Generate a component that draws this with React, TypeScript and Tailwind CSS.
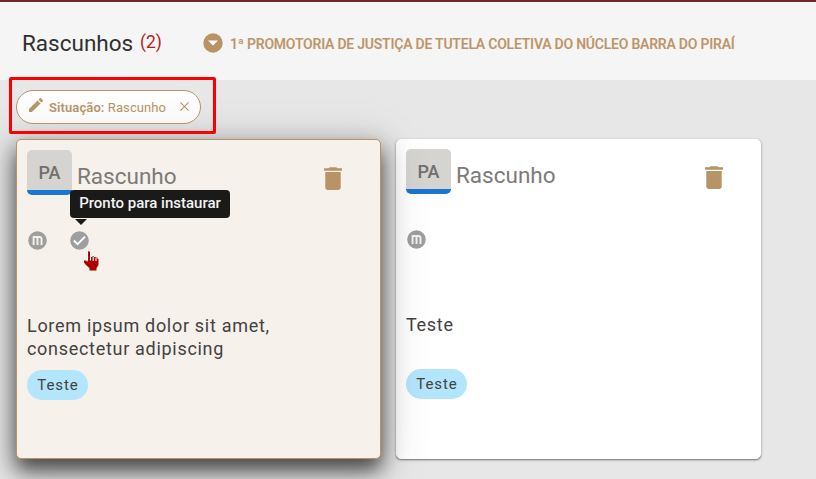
import React from "react";

function Trash() {
  return (
    <svg viewBox="5 3 14 18" preserveAspectRatio="none" className="h-[23px] w-[18px] fill-[#b89366]">
      <path d="M6 19c0 1.100.9 2 2 2h8c1.100 0 2-.9 2-2V7H6v12zM19 4h-3.500l-1-.8h-5l-1 .8H5v2h14V4z" />
    </svg>
  );
}

function MarkM() {
  return (
    <svg viewBox="0 0 19 19" className="h-[19px] w-[19px]">
      <circle cx="9.500" cy="9.500" r="9.300" fill="#9e9e9e" />
      <path d="M5.600 14V6H11.500Q13.500 6 13.500 8V14M9.500 6V14" fill="none" stroke="#f5f1eb" strokeWidth="1.900" />
    </svg>
  );
}

function Check() {
  return (
    <svg viewBox="0 0 19 19" className="h-[19px] w-[19px]">
      <circle cx="9.500" cy="9.500" r="9.300" fill="#9e9e9e" />
      <path d="M3.800 9.500L7.600 13.200L15 5.700" fill="none" stroke="#fff" strokeWidth="1.900" />
    </svg>
  );
}

function Pointer() {
  return (
    <svg viewBox="0 0 18 23" className="absolute left-[65px] top-[109px] h-[23px] w-[18px]">
      <path
        d="M5.500 3Q6.700 1.500 8 3V8H10V7.500H12V8H14V8.500H15.500V10H16.500V16L14.500 19V21.500H7.500V19L4.500 16.500L2 13.500V11.500H4L5.500 13Z"
        fill="#a80000"
      />
      <path d="M5.500 11.500V2.500M8.500 7V11.500M11.200 8V12M14 8.500V12" fill="none" stroke="#fff" strokeWidth="1.100" />
    </svg>
  );
}

function Tooltip() {
  return (
    <div className="absolute left-[53px] top-[50px] flex h-7 w-40 items-start justify-center rounded bg-[#1a1a18] pt-[2px] text-[15px] leading-[22px] font-medium whitespace-nowrap text-[#f3f3f3]">
      Pronto para instaurar
      <span className="absolute left-[5px] top-[29px] border-x-[6px] border-t-[6px] border-x-transparent border-t-[#1a1a18]" />
    </div>
  );
}

function Card({ text, active = false }: { text: string; active?: boolean }) {
  return (
    <article
      className={
        "relative w-[365px] rounded-[5px] border text-[#424242] " +
        (active
          ? "z-10 h-[320px] border-[#b89366] bg-[#f6f1eb] px-[10px] pt-[10px] shadow-[0_12px_17px_-2px_rgba(0,0,0,.45),0_9px_24px_2px_rgba(0,0,0,.36),0_9px_46px_8px_rgba(0,0,0,.12)]"
          : "h-[320px] border-white bg-white px-[9px] pt-[9px] shadow-[0_1px_3px_rgba(0,0,0,.35),0_1px_1px_rgba(0,0,0,.25)]")
      }
    >
      <div className="flex h-[45px]">
        <div className="flex h-[45px] w-[45px] items-center justify-center rounded-[5px] border-b-[5px] border-[#1976d2] bg-[#d5d4d0] pt-[5px] text-[18px] font-medium text-[#716f6d]">
          PA
        </div>
        <h2 className="ml-[5px] mt-[10px] text-[22.500px] leading-8 font-normal text-[#7c7a77]">Rascunho</h2>
        <button className="ml-auto mr-[28px] mt-[17px] h-[23px]">
          <Trash />
        </button>
      </div>
      <div className="mt-[36px] flex h-[19px] gap-[23px] pl-[1px]">
        <MarkM />
        {active && <Check />}
      </div>
      <p className="mt-[64px] h-[46px] w-[300px] text-[18px] leading-[23px] tracking-[.7px]">{text}</p>
      <span className="mt-[10px] flex h-[30px] w-[61px] items-center justify-center rounded-full bg-[#b3e5fc] pl-px text-[15px] tracking-[.9px]">
        Teste
      </span>
      {active && (
        <>
          <Tooltip />
          <Pointer />
        </>
      )}
    </article>
  );
}

export default function App() {
  return (
    <main className="h-[479px] w-[816px] overflow-hidden bg-[#e7e7e7] font-[Roboto,sans-serif]">
      <header className="flex h-20 items-start border-t-2 border-[#70262b] bg-[#f5f5f5] pl-[22px]">
        <h1 className="mt-[25px] w-[112px] text-[22.500px] leading-8 font-normal whitespace-nowrap text-[#303030]">Rascunhos</h1>
        <span className="mt-[24px] ml-[6px] w-[63px] text-[17.500px] leading-8 text-[#b71c1c]">(2)</span>
        <svg viewBox="0 0 20 20" className="mt-[31px] h-5 w-5">
          <circle cx="10" cy="10" r="9.700" fill="#b89366" />
          <path d="M5 7.500h10l-5 5z" fill="#fff" />
        </svg>
        <span className="ml-[7px] mt-[31px] text-[14px] leading-[22px] font-semibold tracking-[-.23px] whitespace-nowrap text-[#bd9569]">
          1ª PROMOTORIA DE JUSTIÇA DE TUTELA COLETIVA DO NÚCLEO BARRA DO PIRAÍ
        </span>
      </header>
      <section className="relative z-20 -mt-[3px] ml-[9px] h-[57px] w-[207px] rounded-[2px] border-[3px] border-[#fa0000] pl-[4px] pt-[10px]">
        <div className="flex h-[34px] w-[185px] items-center rounded-full border border-[#b89366] bg-linear-to-b from-white to-[#f8f8f8] pl-[12px] text-[13px] text-[#b89366]">
          <svg viewBox="3 3 18 18" className="mb-1 h-[14px] w-[14px] fill-current">
            <path d="M3 17.250V21h3.750L17.810 9.940l-3.750-3.750L3 17.250zM20.710 7.040a1 1 0 0 0 0-1.410l-2.340-2.340a1 1 0 0 0-1.410 0l-1.830 1.830 3.750 3.750 1.830-1.830z" />
          </svg>
          <span className="ml-[6px] pt-[2px] tracking-[.1px] whitespace-nowrap">
            <b className="font-semibold">Situação:</b> Rascunho
          </span>
          <svg viewBox="0 0 10 10" className="absolute left-[168px] top-[22px] h-[9px] w-[9px]">
            <path d="M.5.5l9 9M9.500.5l-9 9" stroke="#b89366" strokeWidth="1.200" />
          </svg>
        </div>
      </section>
      <section className="ml-4 mt-[5px] flex items-start gap-[15px]">
        <Card text="Lorem ipsum dolor sit amet, consectetur adipiscing" active />
        <Card text="Teste" />
      </section>
    </main>
  );
}
